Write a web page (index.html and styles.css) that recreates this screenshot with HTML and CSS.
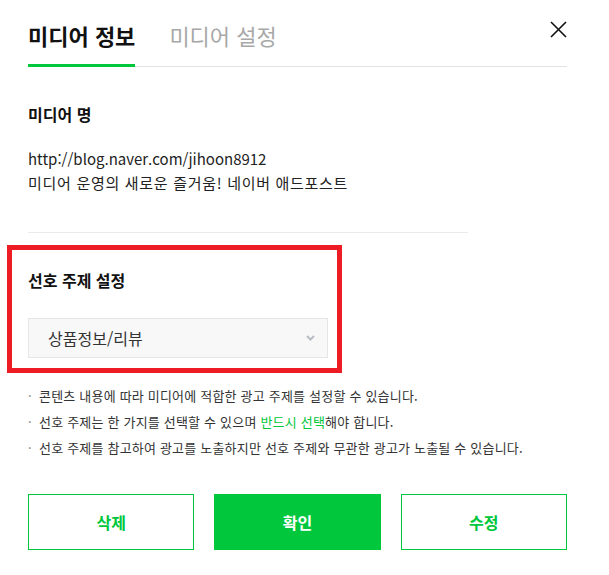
FILE: index.html
```html
<!DOCTYPE html>
<html lang="ko">
<head>
  <meta charset="UTF-8" />
  <meta name="viewport" content="width=device-width, initial-scale=1.0" />
  <title>미디어 정보</title>
  <link rel="stylesheet" href="styles.css">
</head>
<body>

  <div class="modal">
    <div class="modal-head">
      <ul class="tabs">
        <li class="tab active">미디어 정보</li>
        <li class="tab">미디어 설정</li>
      </ul>
      <button class="close-btn" type="button" aria-label="닫기">
        <svg width="17" height="17" viewBox="0 0 17 17">
          <path d="M1 1 L16 16 M16 1 L1 16" stroke="#111" stroke-width="1.6" fill="none" />
        </svg>
      </button>
    </div>

    <div class="info">
      <h3 class="sec-title">미디어 명</h3>
      <p class="media-desc">
        <span class="media-url">http://blog.naver.com/jihoon8912</span><br>
        <span class="media-copy">미디어 운영의 새로운 즐거움! 네이버 애드포스트</span>
      </p>
    </div>

    <div class="topic">
      <h3 class="sec-title">선호 주제 설정</h3>
      <div class="select-box">
        <span>상품정보/리뷰</span>
        <svg class="chev" width="9" height="6" viewBox="0 0 9 6">
          <path d="M1 1 L4.5 4.5 L8 1" stroke="#b9bdc4" stroke-width="2" fill="none" />
        </svg>
      </div>
    </div>

    <ul class="notes">
      <li>콘텐츠 내용에 따라 미디어에 적합한 광고 주제를 설정할 수 있습니다.</li>
      <li>선호 주제는 한 가지를 선택할 수 있으며 <em>반드시 선택</em>해야 합니다.</li>
      <li>선호 주제를 참고하여 광고를 노출하지만 선호 주제와 무관한 광고가 노출될 수 있습니다.</li>
    </ul>

    <div class="actions">
      <button class="btn" type="button">삭제</button>
      <button class="btn btn-primary" type="button">확인</button>
      <button class="btn" type="button">수정</button>
    </div>
  </div>

</body>
</html>
```

FILE: styles.css
```css
body {
  margin: 0;
  background: #fff;
  font-family: "Noto Sans CJK KR", "Noto Sans", sans-serif;
  color: #222;
}

.modal {
  width: 539px;
  padding: 0 42px 0 28px;
}

.modal-head {
  display: flex;
  border-bottom: 1px solid #e2e2e2;
}

.tabs {
  display: flex;
  gap: 34px;
  margin: 0;
  padding: 0;
  list-style: none;
}

.tab {
  padding: 20px 0 14px;
  font-size: 22px;
  line-height: 30px;
  font-weight: 400;
  color: #a8a8a8;
}

.tab.active {
  color: #111;
  font-weight: 700;
  border-bottom: 3px solid #00c73c;
  margin-bottom: -1px;
}

.close-btn {
  margin: 21px 0 0 auto;
  padding: 0;
  width: 17px;
  height: 17px;
  border: none;
  background: none;
  cursor: pointer;
}

.close-btn svg {
  display: block;
}

.sec-title {
  margin: 0;
  font-size: 16px;
  line-height: 22px;
  font-weight: 700;
  color: #111;
}

.info {
  width: 440px;
  padding: 36px 0 37px;
  border-bottom: 1px solid #e8ebee;
}

.media-desc {
  margin: 22px 0 0;
  font-size: 15px;
  line-height: 24px;
  color: #222;
}

.media-copy {
  letter-spacing: 0.7px;
}

.topic {
  position: relative;
  padding-top: 36px;
}

/* red annotation frame */
.topic::after {
  content: "";
  position: absolute;
  left: -21px;
  top: 12px;
  width: 325px;
  height: 118px;
  border: 5px solid #ed1c24;
}

.select-box {
  display: flex;
  align-items: center;
  justify-content: space-between;
  box-sizing: border-box;
  width: 300px;
  height: 40px;
  margin-top: 27px;
  padding: 0 12px 0 19px;
  background: #f8f8f8;
  border: 1px solid #e6e6e6;
  font-size: 16px;
  color: #333;
}

.notes {
  margin: 25px 0 0;
  padding: 0;
  list-style: none;
}

.notes li {
  position: relative;
  padding-left: 11px;
  font-size: 13px;
  line-height: 26px;
  letter-spacing: 0.2px;
  color: #333;
}

.notes li::before {
  content: "·";
  position: absolute;
  left: 0;
  color: #777;
}

.notes em {
  font-style: normal;
  color: #00c73c;
}

.actions {
  display: grid;
  grid-template-columns: repeat(3, 1fr);
  gap: 20px;
  margin-top: 33px;
}

.btn {
  height: 56px;
  border: 1px solid #00c73c;
  background: #fff;
  color: #00c73c;
  font-family: inherit;
  font-size: 16px;
  font-weight: 700;
  cursor: pointer;
}

.btn-primary {
  background: #00c73c;
  color: #fff;
}
```
